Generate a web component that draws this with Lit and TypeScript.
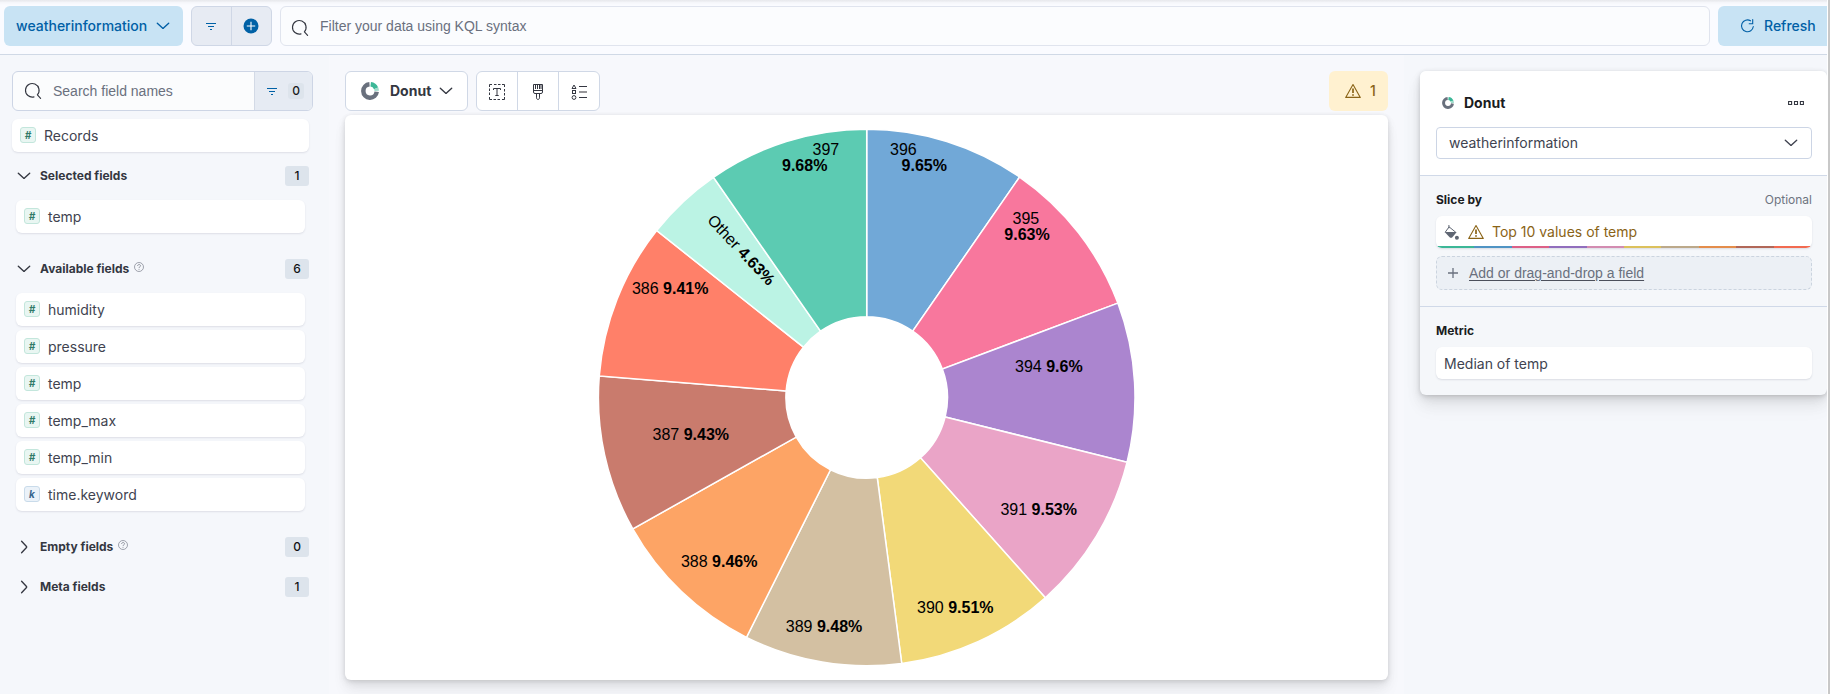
import { LitElement, html, svg, css } from "lit";
import { customElement } from "lit/decorators.js";

interface Slice { name: string; pct: number; color: string; x: number; y: number; vx?: number; vy?: number; rotate?: number; }

const CX = 521.7, CY = 282.5, R = 268.3, RI = 80.8;

// Clockwise from the top of the ring; label positions are in chart coordinates.
const SLICES: Slice[] = [
  { name: "396", pct: 9.65, color: "#71a8d7", x: 545, y: 40, vx: 556.6, vy: 56 },
  { name: "395", pct: 9.63, color: "#f8779d", x: 667.5, y: 109, vx: 659.3, vy: 125 },
  { name: "394", pct: 9.6, color: "#ab85cf", x: 670, y: 257 },
  { name: "391", pct: 9.53, color: "#eaa4c7", x: 655.4, y: 400 },
  { name: "390", pct: 9.51, color: "#f2d978", x: 572, y: 498 },
  { name: "389", pct: 9.48, color: "#d3c0a2", x: 440.8, y: 517 },
  { name: "388", pct: 9.46, color: "#fda465", x: 335.9, y: 452 },
  { name: "387", pct: 9.43, color: "#c97b6d", x: 307.5, y: 325 },
  { name: "386", pct: 9.41, color: "#ff8069", x: 286.9, y: 179 },
  { name: "Other", pct: 4.63, color: "#bbf3e4", x: 361.4, y: 106, rotate: 46.6 },
  { name: "397", pct: 9.68, color: "#5ccbb2", x: 467.5, y: 40, vx: 437, vy: 56 },
];

const STRIP = ["#3cb797", "#5094c4", "#dd6087", "#916ebd", "#d38cb1", "#dcc15c", "#bca98a", "#e48d4b", "#b16758", "#f26a50"];

const point = (r: number, t: number) => `${(CX + r * Math.sin(t)).toFixed(2)} ${(CY - r * Math.cos(t)).toFixed(2)}`;

const chevronDown = html`<svg width="16" height="16" viewBox="0 0 16 16" fill="none" stroke="currentColor" stroke-width="1.35" stroke-linecap="round" stroke-linejoin="round"><path d="M2.3 5.2 7.500 10.100a.8.8 0 0 0 1 0L13.700 5.200"/></svg>`;
const chevronRight = html`<svg width="16" height="16" viewBox="0 0 16 16" fill="none" stroke="currentColor" stroke-width="1.35" stroke-linecap="round" stroke-linejoin="round"><path d="M5.6 2.3 10.5 7.5a.8.8 0 0 1 0 1L5.6 13.7"/></svg>`;
const filterIcon = html`<svg width="16" height="16" viewBox="0 0 16 16" fill="none" stroke="currentColor" stroke-width="1.1"><path d="M3 5.5h10M5 8.5h6M7 11.5h2"/></svg>`;
const plusCircle = html`<svg width="16" height="16" viewBox="0 0 16 16"><circle cx="8" cy="8" r="7.5" fill="currentColor"/><path d="M8 3.8v8.4M3.8 8h8.4" stroke="#fff" stroke-width="1.1"/></svg>`;
const searchIcon = html`<svg width="18" height="18" viewBox="0 0 18 18" fill="none" stroke="currentColor" stroke-width="1.15" stroke-linecap="round"><path d="M10 14.900A6.800 6.800 0 1 1 13.400 12.800M13.400 12.800l3.200 3.600"/></svg>`;
const donutIcon = (size: number) => html`<svg width=${size} height=${size} viewBox="0 0 18 18"><g fill="none" stroke-width="4.500"><path d="M8.500 2.300A6.700 6.700 0 1 0 15.700 9.700" stroke="#69707d"/><path d="M9.700 2.300A6.700 6.700 0 0 1 15.100 6.300" stroke="#3cb797"/><path d="M15.100 6.300A6.700 6.700 0 0 1 15.700 8.900" stroke="#9fdccb"/></g></svg>`;
const warnIcon = html`<svg width="16" height="16" viewBox="0 0 16 16" fill="none" stroke="currentColor"><path d="M8 1.6 15.3 14.4H.7Z" stroke-linejoin="round" stroke-width="1.1"/><path d="M8 5.4v4.6" stroke-width="1.7"/><path d="M8 11.2v1.6" stroke-width="1.7"/></svg>`;
const textIcon = html`<svg width="16" height="16" viewBox="0 0 16 16" fill="none" stroke="currentColor" stroke-width="1"><path d="M.5 3V.5H3M5 .5h2.5M9 .5h2.5M13 .5h2.5V3M15.500 5v2.500M15.500 9v2.500M15.500 13v2.500H13M11 15.500H8.500M7 15.500H4.500M3 15.500H.5V13M.5 11V8.500M.5 7V4.500M4.500 6V4.500h7V6M8 4.500v7M6.300 11.500h3.400"/></svg>`;
const brushIcon = html`<svg width="16" height="16" viewBox="0 0 16 16" fill="none" stroke="currentColor" stroke-width="1"><path d="M3.500 .5h9v7.500a1.500 1.500 0 0 1-1.500 1.500H5A1.500 1.500 0 0 1 3.500 8ZM3.500 6.500h9M5.500 1v4M7.500 1v4M9.500 1v4M11 1v4M6.500 9.500v4.300c0 2.200 3 2.200 3 0V9.500"/></svg>`;
const legendIcon = html`<svg width="16" height="16" viewBox="0 0 16 16" fill="none" stroke="currentColor"><path d="M3 1 1 4.500h4Z"/><rect x="1.500" y="6.500" width="3" height="3"/><circle cx="3" cy="13.500" r="1.900"/><path d="M8 2.500h8M8 13.500h8"/><path d="M8 8h8" stroke-width="2" stroke="#98989b"/></svg>`;
const refreshIcon = html`<svg width="16" height="16" viewBox="0 0 16 16" fill="none" stroke="currentColor" stroke-width="1.1" stroke-linecap="round"><path d="M10.500 2.800A5.900 5.900 0 1 0 13.300 8.500M12.700 1.500v4.200H9.200"/></svg>`;
const helpIcon = html`<svg width="10" height="10" viewBox="0 0 10 10" fill="none" stroke="currentColor" stroke-width=".7"><circle cx="5" cy="5" r="4.500"/><path d="M3.600 4c0-2 2.900-1.900 2.900-.2C6.500 4.900 5 4.800 5 6M5 6.900v.9" stroke-width=".8"/></svg>`;
const bucketIcon = html`<svg width="16" height="16" viewBox="0 0 16 16"><path d="M4.900 1v3.200M5 3 1.200 8.200M5 2.800 11.800 8.300" fill="none" stroke="currentColor"/><path d="M.7 8h12L8.400 13.200c-.8.8-2 .8-2.800 0Z" fill="currentColor"/><circle cx="12.900" cy="13.800" r="2" fill="currentColor"/></svg>`;

@customElement("field-item")
export class FieldItem extends LitElement {
  static properties = { name: {}, kind: {} };
  declare name: string;
  declare kind: string;
  static styles = css`
    :host { display: flex; align-items: center; box-sizing: border-box; height: 33px; padding: 0 8px 1px; gap: 8px;
      background: #fff; border-radius: 6px; box-shadow: 0 1px 2px rgba(60, 65, 90, .13); color: #404350; font-size: 14px; }
    .token { box-sizing: border-box; width: 16px; height: 16px; border: 1px solid #c3e6dc; border-radius: 3px; background: #e9f6f2;
      color: #317a68; font: italic 700 10px/14px Inter, sans-serif; text-align: center; }
    .k { border-color: #c9dbea; background: #ebf2f9; color: #39658c; }
    .label { padding-top: 1px; line-height: 20px; }
  `;
  render() {
    return html`<span class="token ${this.kind === "k" ? "k" : ""}">${this.kind || "#"}</span><span class="label">${this.name}</span>`;
  }
}

@customElement("app-root")
export class AppRoot extends LitElement {
  static styles = css`
    :host { display: block; height: 694px; overflow: hidden; font-family: Inter, sans-serif; font-size: 14px; color: #343741; }
    * { box-sizing: border-box; }
    svg { display: block; flex: none; }
    .lift { padding-bottom: 2px; }
    .frame { height: 694px; border-right: 2px solid #c8c8c8; background: #fff; padding-right: 1px; }
    .app { height: 694px; overflow: hidden; display: flex; flex-direction: column; background: #f7f8fc; }
    .top { height: 55px; flex: none; display: flex; gap: 8px; padding: 6px 0 8px 4px; border-bottom: 1px solid #d0d9e6;
      background: linear-gradient(#e8e9ed 0, #ebecf0 1px, #f5f6fa 2.500px, #fafbff 5px); }
    .view { width: 179px; height: 40px; border-radius: 6px; background: #c8e3f4; color: #005fa6; font-weight: 500;
      display: flex; align-items: center; justify-content: space-between; padding: 0 12px; }
    .pair { display: flex; width: 81px; height: 40px; border: 1px solid #cfd7e6; border-radius: 6px; background: #e7ebf3; color: #0061a6; }
    .pair span { flex: 1; display: grid; place-items: center; padding-right: 1px; }
    .pair span + span { border-left: 1px solid #cfd7e6; }
    .query { flex: 1; height: 40px; display: flex; align-items: center; gap: 11px; padding-left: 10px; border: 1px solid #e0e4ee; border-radius: 6px; background: #fbfcfe; color: #343741; }
    .query svg { margin-top: 3px; }
    .ph { color: #6a707e; font-family: "Liberation Sans", Arial, sans-serif; }
    .refresh { width: 109px; flex: none; height: 40px; border-radius: 6px 0 0 6px; background: #c8e3f4; color: #005fa6; font-weight: 500; display: flex; align-items: center; gap: 8px; padding-left: 22px; }
    .body { flex: 1; display: flex; min-height: 0; }
    .side { width: 329px; flex: none; background: #f5f7fb; padding: 16px 16px 0 12px; }
    .search { width: 301px; height: 40px; display: flex; border: 1px solid #cdd5e5; border-radius: 6px; background: #fbfcfd; overflow: hidden; }
    .searchtext { flex: 1; display: flex; align-items: center; gap: 11px; padding-left: 11px; }
    .count { width: 58px; border-left: 1px solid #d3dae6; background: #e6ebf3; display: flex; align-items: center; gap: 8px; padding-left: 9px; color: #0061a6; }
    .count b { width: 16px; height: 16px; border-radius: 3px; background: #dde4ec; color: #1a1c21; font-size: 12px; line-height: 15px; font-weight: 500; text-align: center; }
    .records { width: 297px; margin-top: 8px; }
    .group { width: 297px; height: 20px; display: flex; align-items: center; padding-left: 4px; color: #343741; font-size: 12px; font-weight: 700; }
    .group .t { margin-left: 8px; }
    .group .help { margin: -5px 0 0 5px; color: #7b808c; }
    .badge { margin-left: auto; width: 24px; height: 20px; border-radius: 3px; background: #dde4ec; color: #101114; font-weight: 500; line-height: 19px; text-align: center; }
    .list { width: 289px; margin-left: 4px; display: grid; gap: 4px; }
    .main { width: 1075px; flex: none; padding: 16px 16px 0; display: flex; flex-direction: column; gap: 4px; }
    .bar { height: 40px; display: flex; gap: 8px; }
    .type { width: 123px; border: 1px solid #d0d8e6; border-radius: 6px; background: #fff; display: flex; align-items: center; padding-left: 15px; font-weight: 700; }
    .type .t { margin: 0 6px 0 11px; width: 42px; }
    .tools { width: 124px; display: flex; border: 1px solid #d0d8e6; border-radius: 6px; background: #fff; }
    .tools span { flex: 1; display: grid; place-items: center; padding-top: 2px; }
    .tools span + span { border-left: 1px solid #d0d8e6; }
    .warn { margin-left: auto; width: 59px; border-radius: 6px; background: #fff1d0; color: #8a6316; display: flex; align-items: center; gap: 9px; padding-left: 16px; font-weight: 500; }
    .canvas { height: 565px; background: #fff; border-radius: 6px; box-shadow: 0 1px 4px rgba(0, 0, 0, .1), 0 3px 8px rgba(0, 0, 0, .06), 0 6px 13px rgba(0, 0, 0, .05), 0 13px 16px rgba(0, 0, 0, .04); }
    .slice { stroke: #fff; stroke-width: 1.5; }
    .lab { font-family: "Liberation Sans", Arial, sans-serif; font-size: 16px; fill: #000; white-space: pre; }
    .bold { font-weight: 700; }
    .config { flex: 1; padding: 16px 0 0 16px; background: #f5f7fb; }
    .panel { height: 324px; border-radius: 6px; background: #f5f7fa; overflow: hidden; box-shadow: 0 1px 4px rgba(0, 0, 0, .12), 0 3px 9px rgba(0, 0, 0, .08), 0 8px 15px rgba(0, 0, 0, .07), 0 13px 20px rgba(0, 0, 0, .04); }
    .head { height: 105px; background: #fff; border-bottom: 1px solid #d0d9e8; padding: 20px 15px 0 16px; }
    .title { height: 24px; display: flex; align-items: center; gap: 10px; padding: 0 8px 0 6px; color: #1a1c21; font-weight: 700; }
    .dots { margin-left: auto; }
    .select { height: 32px; margin-top: 12px; border: 1px solid #ccd5e5; border-radius: 4px; background: #fff; display: flex; align-items: center; justify-content: space-between; padding: 0 12px; color: #404350; }
    .sec { padding: 16px 15px 0 16px; }
    .slicesec { height: 131px; border-bottom: 1px solid #d0d9e8; }
    .row { height: 16px; display: flex; justify-content: space-between; align-items: center; font-size: 12px; margin-bottom: 8px; color: #1a1c21; font-weight: 700; }
    .opt { color: #6e7480; font-weight: 400; }
    .dim { height: 32px; border-radius: 6px; background: #fff; box-shadow: 0 1px 2px rgba(60, 65, 90, .14); overflow: hidden; color: #404350; }
    .dimrow { height: 30px; display: flex; align-items: center; padding: 2px 8px 0; }
    .bucket { color: #5f6673; }
    .amber { display: flex; align-items: center; gap: 8px; margin-left: 8px; color: #8a6316; }
    .strip { display: flex; height: 2px; margin: 0 1px; }
    .strip i { flex: 1; }
    .drop { margin-top: 8px; height: 34px; border: 1px dashed #cbd4df; border-radius: 6px; background: #ecf0f5; display: flex; align-items: center; gap: 10px; padding-left: 10px; color: #6a707e; font-family: "Liberation Sans", Arial, sans-serif; font-size: 14px; }
    .drop .u { text-decoration: underline; text-decoration-color: #4c505c; text-underline-offset: 2px; }
  `;

  private chart() {
    let acc = 0;
    const shapes = SLICES.map((s) => {
      const a = (acc / 100.01) * 2 * Math.PI;
      acc += s.pct;
      const b = (acc / 100.01) * 2 * Math.PI;
      return svg`<path class="slice" fill=${s.color} d="M${point(R, a)}A${R} ${R} 0 0 1 ${point(R, b)}L${point(RI, b)}A${RI} ${RI} 0 0 0 ${point(RI, a)}Z"/>`;
    });
    const labels = SLICES.map((s) =>
      s.vx
        ? svg`<text class="lab" x=${s.x} y=${s.y}>${s.name}</text><text class="lab bold" x=${s.vx} y=${s.vy!}>${s.pct}%</text>`
        : svg`<text class="lab" x=${s.x} y=${s.y} transform=${s.rotate ? `rotate(${s.rotate} ${s.x} ${s.y})` : "rotate(0)"}>${s.name} <tspan class="bold">${s.pct}%</tspan></text>`);
    return html`<svg width="1043" height="565" viewBox="0 0 1043 565">${shapes}${labels}</svg>`;
  }

  private group(name: string, count: number, open: boolean, help: boolean) {
    return html`${open ? chevronDown : chevronRight}<span class="t lift">${name}</span>${help ? html`<span class="help">${helpIcon}</span>` : ""}<span class="badge">${count}</span>`;
  }

  render() {
    return html`<div class="frame"><div class="app">
      <div class="top">
        <div class="view"><span class="lift">weatherinformation</span>${chevronDown}</div>
        <div class="pair"><span>${filterIcon}</span><span>${plusCircle}</span></div>
        <div class="query">${searchIcon}<span class="ph">Filter your data using KQL syntax</span></div>
        <div class="refresh">${refreshIcon}<span class="lift">Refresh</span></div>
      </div>
      <div class="body">
        <div class="side">
          <div class="search">
            <div class="searchtext">${searchIcon}<span class="ph">Search field names</span></div>
            <div class="count">${filterIcon}<b>0</b></div>
          </div>
          <field-item class="records" name="Records"></field-item>
          <div class="group" style="margin-top:14px">${this.group("Selected fields", 1, true, false)}</div>
          <div class="list" style="margin-top:14px"><field-item name="temp"></field-item></div>
          <div class="group" style="margin-top:26px">${this.group("Available fields", 6, true, true)}</div>
          <div class="list" style="margin-top:14px">
            ${["humidity", "pressure", "temp", "temp_max", "temp_min"].map((n) => html`<field-item name=${n}></field-item>`)}
            <field-item name="time.keyword" kind="k"></field-item>
          </div>
          <div class="group" style="margin-top:26px">${this.group("Empty fields", 0, false, true)}</div>
          <div class="group" style="margin-top:20px">${this.group("Meta fields", 1, false, false)}</div>
        </div>
        <div class="main">
          <div class="bar">
            <div class="type">${donutIcon(18)}<span class="t lift">Donut</span>${chevronDown}</div>
            <div class="tools"><span>${textIcon}</span><span>${brushIcon}</span><span>${legendIcon}</span></div>
            <div class="warn">${warnIcon}<span class="lift">1</span></div>
          </div>
          <div class="canvas">${this.chart()}</div>
        </div>
        <div class="config">
          <div class="panel">
            <div class="head">
              <div class="title">${donutIcon(12)}<span class="lift">Donut</span>
                <svg class="dots" width="16" height="16" viewBox="0 0 16 16" fill="none" stroke="#343741" stroke-width="1.1"><path d="M.6 6.500h3v3h-3zM6.500 6.500h3v3h-3zM12.400 6.500h3v3h-3z"/></svg>
              </div>
              <div class="select"><span class="lift">weatherinformation</span>${chevronDown}</div>
            </div>
            <div class="sec slicesec">
              <div class="row"><span class="lift">Slice by</span><span class="opt lift">Optional</span></div>
              <div class="dim">
                <div class="dimrow"><span class="bucket">${bucketIcon}</span><span class="amber">${warnIcon}<span class="lift">Top 10 values of temp</span></span></div>
                <div class="strip">${STRIP.map((c) => html`<i style="background:${c}"></i>`)}</div>
              </div>
              <div class="drop"><svg width="12" height="12" viewBox="0 0 12 12"><path d="M6 1v10M1 6h10" stroke="currentColor" stroke-width="1.3"/></svg><span class="u">Add or drag-and-drop a field</span></div>
            </div>
            <div class="sec">
              <div class="row"><span class="lift">Metric</span></div>
              <div class="dim"><div class="dimrow">Median of temp</div></div>
            </div>
          </div>
        </div>
      </div>
    </div></div>`;
  }
}
